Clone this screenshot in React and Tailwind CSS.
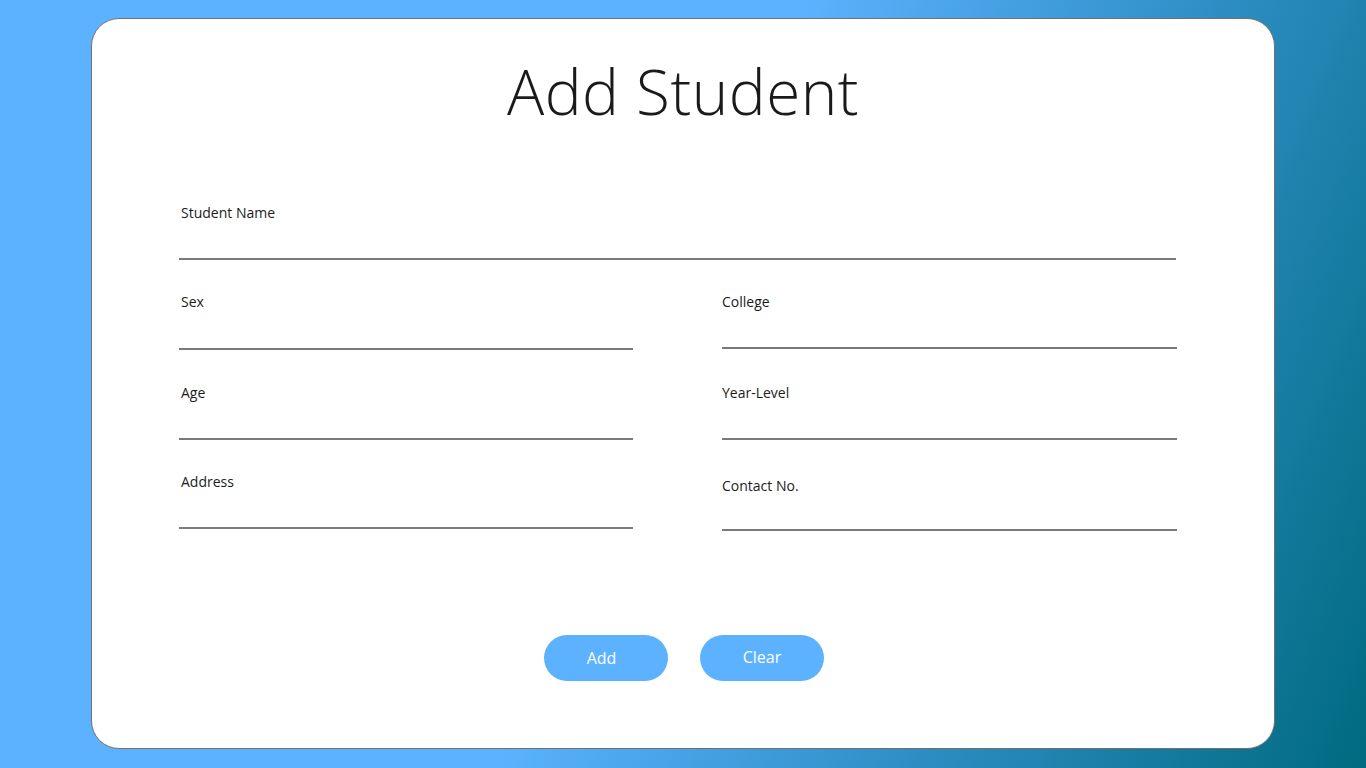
import React from 'react';

const Field = ({ label, labelTop = 'pt-0', gap = 'h-[36px]', indent = 'pl-[2px]' }) => (
  <div className={`flex flex-col ${labelTop}`}>
    <label className={`text-[14px] leading-[18px] text-[#1b1b1b] ${indent}`}>{label}</label>
    <div className={gap} />
    <div className="h-[2px] bg-[#7a7a7a]" />
  </div>
);

export default function App() {
  return (
    <div
      className="w-[1366px] h-[768px] flex pt-[18px] pl-[91px] overflow-hidden bg-[linear-gradient(112deg,#5cb2fe_0%,#5cb2fe_48%,#2f8fc6_72%,#006a80_100%)]"
      style={{ fontFamily: '"Open Sans", "Noto Sans", sans-serif' }}
    >
      <div className="w-[1184px] h-[731px] bg-white border border-[#707070] rounded-[28px] flex flex-col">
        <h1 className="text-center text-[62px] font-light leading-[80px] text-[#1a1a1a] mt-[32px] tracking-[0.5px]">
          Add Student
        </h1>

        <div className="pl-[87px] mt-[73px] w-[1085px]">
          <div className="w-[997px]">
            <Field label="Student Name" />
          </div>

          <div className="grid grid-cols-[454px_455px] gap-x-[89px] mt-[33px]">
            <Field label="Sex" gap="h-[37px]" />
            <Field label="College" gap="h-[36px]" indent="pl-0" />
          </div>
          <div className="grid grid-cols-[454px_455px] gap-x-[89px] mt-[34px]">
            <Field label="Age" />
            <Field label="Year-Level" indent="pl-0" />
          </div>
          <div className="grid grid-cols-[454px_455px] gap-x-[89px] mt-[33px]">
            <Field label="Address" />
            <Field label="Contact No." labelTop="pt-[4px]" gap="h-[34px]" indent="pl-0" />
          </div>
        </div>

        <div className="flex justify-center gap-[32px] mt-[104px] pl-[2px]">
          <button className="w-[124px] h-[46px] rounded-full bg-[#5cb2fe] text-white text-[16px] pr-[9px]">
            Add
          </button>
          <button className="w-[124px] h-[46px] rounded-full bg-[#5cb2fe] text-white text-[16px] pb-[3px]">
            Clear
          </button>
        </div>
      </div>
    </div>
  );
}
